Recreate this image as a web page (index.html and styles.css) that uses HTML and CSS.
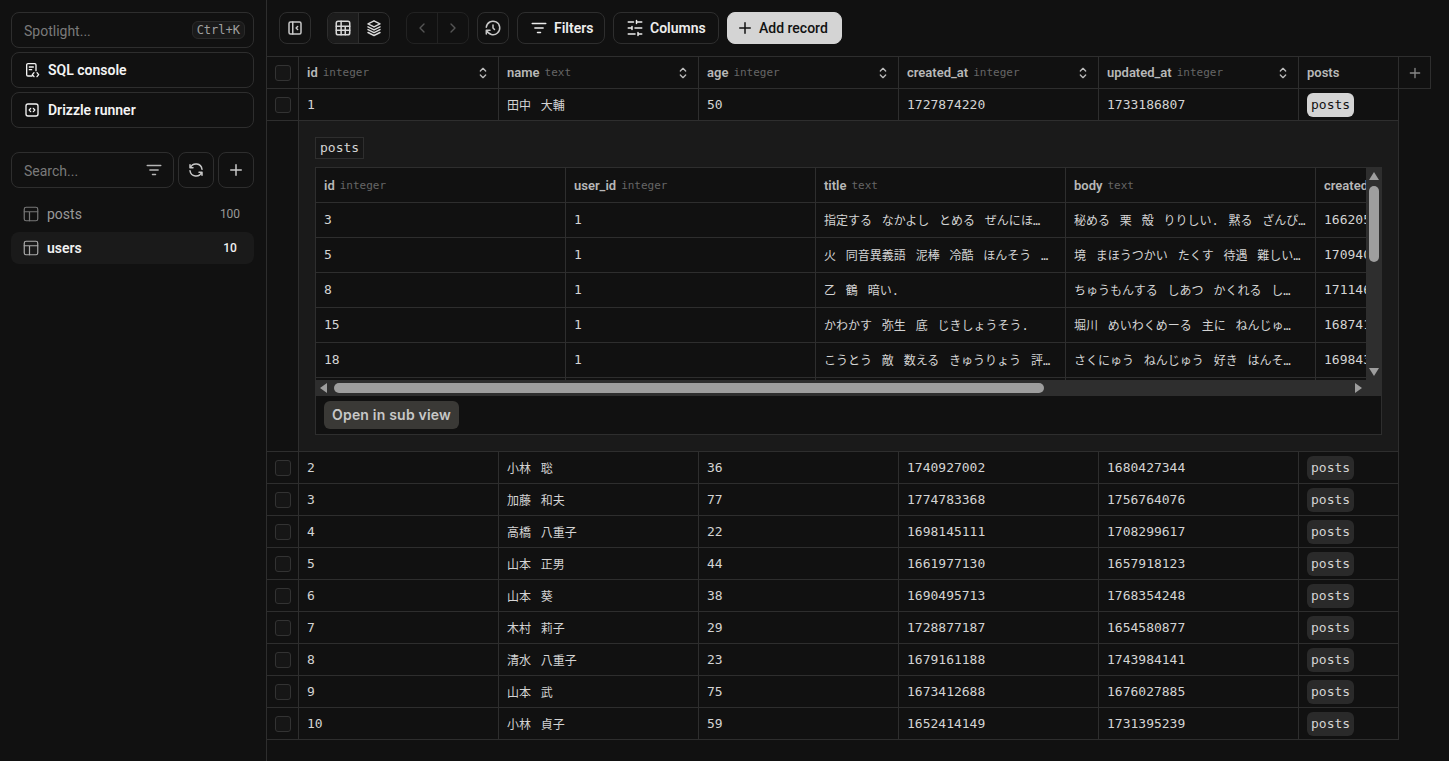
FILE: index.html
```html
<!DOCTYPE html>
<html lang="ja">
<head>
<meta charset="utf-8">
<title>Drizzle Studio</title>
<link rel="stylesheet" href="styles.css">
</head>
<body>
<svg class="defs" width="0" height="0" aria-hidden="true">
  <symbol id="i-table" viewBox="0 0 24 24"><rect x="3" y="3" width="18" height="18" rx="2.5"/><path d="M3 9.5h18M3 15h18M9.5 3v18M15 9.5v11.500"/></symbol>
  <symbol id="i-tbl" viewBox="0 0 24 24"><rect x="3" y="3" width="18" height="18" rx="2.500"/><path d="M3 9h18M10 9v12"/></symbol>
  <symbol id="i-file" viewBox="0 0 24 24"><path d="M12 21H6a2 2 0 0 1-2-2V4.500a2 2 0 0 1 2-2h10a2 2 0 0 1 2 2V13M8 7.500h6M8 11.500h3.500M15 16l-2.500 3 2.500 3M19.500 16l2.500 3-2.500 3"/></symbol>
  <symbol id="i-code" viewBox="0 0 24 24"><rect x="3" y="3" width="18" height="18" rx="3"/><path d="M10 9.500 7.800 12l2.200 2.500M14 9.500l2.200 2.500-2.200 2.500"/></symbol>
  <symbol id="i-filter" viewBox="0 0 24 24"><path d="M3 6h18M6.500 12h11M10 18h4"/></symbol>
  <symbol id="i-refresh" viewBox="0 0 24 24"><path d="M20 11a8.100 8.100 0 0 0-15.500-2m-.5-4v4h4M4 13a8.100 8.100 0 0 0 15.500 2m.5 4v-4h-4"/></symbol>
  <symbol id="i-plus" viewBox="0 0 24 24"><path d="M12 5v14M5 12h14"/></symbol>
  <symbol id="i-collapse" viewBox="0 0 24 24"><rect x="4" y="4" width="16" height="16" rx="2"/><path d="M9 4v16M15.500 10l-2 2 2 2"/></symbol>
  <symbol id="i-stack" viewBox="0 0 24 24"><path d="M12 2.500 4 6.500l8 4 8-4-8-4M4 10.500l8 4 8-4M4 18l8 4 8-4M4 14.200l8 4 8-4"/></symbol>
  <symbol id="i-left" viewBox="0 0 24 24"><path d="m15 6-6 6 6 6"/></symbol>
  <symbol id="i-right" viewBox="0 0 24 24"><path d="m9 6 6 6-6 6"/></symbol>
  <symbol id="i-history" viewBox="0 0 24 24"><path d="M12 8v4l2 2M3.050 11a9 9 0 1 1 .5 4m-.5 5v-5h5"/></symbol>
  <symbol id="i-sliders" viewBox="0 0 24 24"><path d="M21 4h-7M10 4H3M21 12h-9M8 12H3M21 20h-5M12 20H3M14 2v4M8 10v4M16 18v4"/></symbol>
  <symbol id="i-sort" viewBox="0 0 24 24"><path d="m8 9 4-4 4 4M16 15l-4 4-4-4"/></symbol>
</svg>

<div class="app">
  <aside class="sidebar">
    <div class="side-stack">
      <div class="side-btn spotlight"><span class="hint">Spotlight...</span><kbd>Ctrl+K</kbd></div>
      <div class="side-btn strong"><svg class="ic16"><use href="#i-file"/></svg><span>SQL console</span></div>
      <div class="side-btn strong"><svg class="ic16"><use href="#i-code"/></svg><span>Drizzle runner</span></div>
    </div>
    <div class="search-row">
      <div class="search"><span class="hint">Search...</span><svg class="ic18"><use href="#i-filter"/></svg></div>
      <div class="square-btn"><svg class="ic18"><use href="#i-refresh"/></svg></div>
      <div class="square-btn"><svg class="ic18"><use href="#i-plus"/></svg></div>
    </div>
    <ul class="tables">
      <li class="table-item"><svg class="ic-tbl"><use href="#i-tbl"/></svg><span class="table-name">posts</span><span class="count">100</span></li>
      <li class="table-item active"><svg class="ic-tbl"><use href="#i-tbl"/></svg><span class="table-name">users</span><span class="count">10</span></li>
    </ul>
  </aside>

  <main class="main">
    <div class="toolbar">
      <div class="tool icon-tool"><svg class="ic18"><use href="#i-collapse"/></svg></div>
      <div class="seg">
        <div class="seg-item on"><svg class="ic18"><use href="#i-table"/></svg></div>
        <div class="seg-item"><svg class="ic18"><use href="#i-stack"/></svg></div>
      </div>
      <div class="seg dim">
        <div class="seg-item"><svg class="ic16"><use href="#i-left"/></svg></div>
        <div class="seg-item"><svg class="ic16"><use href="#i-right"/></svg></div>
      </div>
      <div class="tool icon-tool near"><svg class="ic18"><use href="#i-history"/></svg></div>
      <div class="tool near filters"><svg class="ic18"><use href="#i-filter"/></svg><span>Filters</span></div>
      <div class="tool near columns"><svg class="ic18"><use href="#i-sliders"/></svg><span>Columns</span></div>
      <div class="tool near primary"><svg class="ic18"><use href="#i-plus"/></svg><span>Add record</span></div>
    </div>

    <table class="grid">
      <colgroup><col class="c-check"><col class="c-200"><col class="c-200"><col class="c-200"><col class="c-200"><col class="c-200"><col class="c-100"><col class="c-check"></colgroup>
      <thead>
        <tr>
          <th><span class="check"></span></th>
          <th><div class="th"><b>id</b><i>integer</i><svg class="ic16"><use href="#i-sort"/></svg></div></th>
          <th><div class="th"><b>name</b><i>text</i><svg class="ic16"><use href="#i-sort"/></svg></div></th>
          <th><div class="th"><b>age</b><i>integer</i><svg class="ic16"><use href="#i-sort"/></svg></div></th>
          <th><div class="th"><b>created_at</b><i>integer</i><svg class="ic16"><use href="#i-sort"/></svg></div></th>
          <th><div class="th"><b>updated_at</b><i>integer</i><svg class="ic16"><use href="#i-sort"/></svg></div></th>
          <th><div class="th"><b>posts</b></div></th>
          <th class="add-col"><svg class="ic16"><use href="#i-plus"/></svg></th>
        </tr>
      </thead>
      <tbody>
        <tr><td class="cc"><span class="check"></span></td><td>1</td><td class="cjk">田中 大輔</td><td>50</td><td>1727874220</td><td>1733186807</td><td><span class="rel open">posts</span></td></tr>
        <tr>
          <td class="cc"></td>
          <td class="expanded" colspan="6">
            <span class="sub-tag">posts</span>
            <div class="sub-box">
              <div class="scroller">
                <div class="viewport">
                  <table class="subgrid">
                    <thead>
                      <tr>
                        <th><div class="th"><b>id</b><i>integer</i></div></th>
                        <th><div class="th"><b>user_id</b><i>integer</i></div></th>
                        <th><div class="th"><b>title</b><i>text</i></div></th>
                        <th><div class="th"><b>body</b><i>text</i></div></th>
                        <th><div class="th"><b>created_at</b><i>integer</i></div></th>
                      </tr>
                    </thead>
                    <tbody>
                      <tr><td>3</td><td>1</td><td class="cjk">指定する なかよし とめる ぜんにほ…</td><td class="cjk">秘める 栗 殻 りりしい. 黙る ざんぴ…</td><td>1662058</td></tr>
                      <tr><td>5</td><td>1</td><td class="cjk">火 同音異義語 泥棒 冷酷 ほんそう …</td><td class="cjk">境 まほうつかい たくす 待遇 難しい…</td><td>1709400</td></tr>
                      <tr><td>8</td><td>1</td><td class="cjk">乙 鶴 暗い.</td><td class="cjk">ちゅうもんする しあつ かくれる し…</td><td>1711460</td></tr>
                      <tr><td>15</td><td>1</td><td class="cjk">かわかす 弥生 底 じきしょうそう.</td><td class="cjk">堀川 めいわくめーる 主に ねんじゅ…</td><td>1687410</td></tr>
                      <tr><td>18</td><td>1</td><td class="cjk">こうとう 敵 数える きゅうりょう 評…</td><td class="cjk">さくにゅう ねんじゅう 好き はんそ…</td><td>1698430</td></tr>
                      <tr><td></td><td></td><td></td><td></td><td></td></tr>
                    </tbody>
                  </table>
                </div>
                <div class="vbar">
                  <span class="arrow up"></span>
                  <span class="vthumb"></span>
                  <span class="arrow down"></span>
                </div>
                <div class="hbar">
                  <span class="arrow back"></span>
                  <span class="hthumb"></span>
                  <span class="arrow fwd"></span>
                </div>
                <div class="corner"></div>
              </div>
              <div class="sub-foot"><span class="open-sub">Open in sub view</span></div>
            </div>
          </td>
        </tr>
        <tr><td class="cc"><span class="check"></span></td><td>2</td><td class="cjk">小林 聡</td><td>36</td><td>1740927002</td><td>1680427344</td><td><span class="rel">posts</span></td></tr>
        <tr><td class="cc"><span class="check"></span></td><td>3</td><td class="cjk">加藤 和夫</td><td>77</td><td>1774783368</td><td>1756764076</td><td><span class="rel">posts</span></td></tr>
        <tr><td class="cc"><span class="check"></span></td><td>4</td><td class="cjk">高橋 八重子</td><td>22</td><td>1698145111</td><td>1708299617</td><td><span class="rel">posts</span></td></tr>
        <tr><td class="cc"><span class="check"></span></td><td>5</td><td class="cjk">山本 正男</td><td>44</td><td>1661977130</td><td>1657918123</td><td><span class="rel">posts</span></td></tr>
        <tr><td class="cc"><span class="check"></span></td><td>6</td><td class="cjk">山本 葵</td><td>38</td><td>1690495713</td><td>1768354248</td><td><span class="rel">posts</span></td></tr>
        <tr><td class="cc"><span class="check"></span></td><td>7</td><td class="cjk">木村 莉子</td><td>29</td><td>1728877187</td><td>1654580877</td><td><span class="rel">posts</span></td></tr>
        <tr><td class="cc"><span class="check"></span></td><td>8</td><td class="cjk">清水 八重子</td><td>23</td><td>1679161188</td><td>1743984141</td><td><span class="rel">posts</span></td></tr>
        <tr><td class="cc"><span class="check"></span></td><td>9</td><td class="cjk">山本 武</td><td>75</td><td>1673412688</td><td>1676027885</td><td><span class="rel">posts</span></td></tr>
        <tr><td class="cc"><span class="check"></span></td><td>10</td><td class="cjk">小林 貞子</td><td>59</td><td>1652414149</td><td>1731395239</td><td><span class="rel">posts</span></td></tr>
      </tbody>
    </table>
  </main>
</div>
</body>
</html>
```
FILE: styles.css
```css
* { box-sizing: border-box; }
html, body { margin: 0; height: 100%; }
body {
  background: #111;
  color: #d4d4d4;
  font-family: Roboto, "Noto Sans CJK JP", sans-serif;
  font-size: 14px;
  overflow: hidden;
}
.defs { position: absolute; }
svg { fill: none; stroke: currentColor; stroke-width: 2; stroke-linecap: round; stroke-linejoin: round; flex: none; }
.ic-tbl { width: 18px; height: 18px; }
.ic16 { width: 16px; height: 16px; }
.ic18 { width: 18px; height: 18px; }

.app { display: flex; height: 761px; }

/* Sidebar */
.sidebar { width: 267px; flex: none; border-right: 1px solid #2e2e2e; padding: 12px 12px 0 11px; }
.side-stack { display: flex; flex-direction: column; gap: 4px; }
.side-btn {
  height: 36px; display: flex; align-items: center; gap: 8px;
  padding: 0 8px 0 12px; border: 1px solid #2e2e2e; border-radius: 8px; color: #fff;
}
.spotlight { justify-content: space-between; color: #7a7a7a; }
.hint { padding-top: 2px; }
.strong { font-weight: 600; color: #f4f4f4; }
kbd {
  font: 12px "DejaVu Sans Mono", monospace; color: #a0a0a0; height: 18px; line-height: 16px;
  padding: 0 4px; border: 1px solid #2a2a2a; border-radius: 6px; background: #1a1a1a;
}
.search-row { display: flex; gap: 4px; margin-top: 24px; }
.search {
  flex: 1; height: 36px; display: flex; align-items: center; justify-content: space-between;
  padding: 0 10px 0 12px; border: 1px solid #2e2e2e; border-radius: 8px; color: #7a7a7a;
}
.search svg { color: #b5b5b5; }
.square-btn {
  width: 36px; height: 36px; display: flex; align-items: center; justify-content: center;
  border: 1px solid #2e2e2e; border-radius: 8px; color: #c8c8c8;
}
.tables { list-style: none; margin: 10px 0 0; padding: 0; display: flex; flex-direction: column; gap: 2px; }
.table-item {
  height: 32px; display: flex; align-items: center; padding: 0 12px 0 11px;
  border-radius: 8px; color: #999; font-size: 14px;
}
.table-item svg { color: #777; stroke-width: 1.6; }
.table-name { margin-left: 7px; flex: 1; }
.count { width: 24px; text-align: center; font-size: 12px; color: #999; }
.table-item.active { background: #1a1a1a; color: #f0f0f0; font-weight: 600; }
.table-item.active svg { color: #aaa; }
.table-item.active .count { color: #f0f0f0; font-weight: 500; }

/* Toolbar */
.main { flex: 1; min-width: 0; }
.toolbar { height: 56px; display: flex; align-items: center; padding-left: 12px; }
.tool {
  height: 32px; display: flex; align-items: center; gap: 6px; padding: 0 12px; white-space: nowrap;
  border: 1px solid #2e2e2e; border-radius: 8px; color: #ededed; font-weight: 600; font-size: 14px;
}
.icon-tool { width: 32px; padding: 0; justify-content: center; color: #c8c8c8; }
.near { margin-left: 8px; }
.filters { width: 88px; }
.columns { width: 106px; }
.primary { width: 115px; padding: 0 8px; gap: 5px; background: #d4d4d4; border-color: #d4d4d4; color: #111; font-weight: 500; }
.seg { display: flex; width: 63px; height: 32px; margin-left: 16px; border: 1px solid #2e2e2e; border-radius: 8px; overflow: hidden; }
.seg-item { flex: 1; display: flex; align-items: center; justify-content: center; color: #d8d8d8; }
.seg-item + .seg-item { border-left: 1px solid #2e2e2e; }
.seg-item.on { background: #1c1c1c; }
.seg.dim { border-color: #222; }
.seg.dim .seg-item { color: #555; }
.seg.dim .seg-item + .seg-item { border-left-color: #222; }

/* Main grid */
.grid, .subgrid { border-collapse: separate; border-spacing: 0; table-layout: fixed; }
.grid { width: 1164px; font: 13px "DejaVu Sans Mono", "Noto Sans CJK JP", monospace; color: #d4d4d4; }
.c-check { width: 32px; }
.c-200 { width: 200px; }
.c-100 { width: 100px; }
.grid th, .grid td, .subgrid th, .subgrid td {
  border-right: 1px solid #2e2e2e; border-bottom: 1px solid #2e2e2e;
  padding: 0 8px; text-align: left; white-space: nowrap; overflow: hidden; font-weight: 400;
}
.grid td.cjk { font-size: 12px; word-spacing: 2.6px; }
.grid > thead th { height: 33px; border-top: 1px solid #2e2e2e; }
.grid > tbody > tr > td { height: 32px; }
.grid > thead th:first-child, .grid > tbody > tr > td.cc { padding: 0; text-align: center; }
.check {
  display: inline-block; width: 16px; height: 16px; vertical-align: middle;
  border: 1px solid #333; border-radius: 3px; background: #161616;
}
.th { display: flex; align-items: center; gap: 5px; }
.th b { font: 600 13px Roboto, sans-serif; color: #b8b8b8; }
.th i { font: 11px "DejaVu Sans Mono", monospace; color: #666; }
.th svg { margin-left: auto; margin-right: -1px; color: #bbb; }
.grid th.add-col { padding: 0; text-align: center; color: #888; }
.add-col svg { vertical-align: middle; }
.rel {
  display: inline-block; height: 24px; line-height: 24px; padding: 0 4px; border-radius: 6px;
  background: #2a2a2a; vertical-align: middle;
}
.rel.open { background: #d4d4d4; color: #111; }

/* Expanded row */
.grid > tbody > tr > td.expanded { background: #1a1a1a; padding: 16px; height: 331px; vertical-align: top; }
.sub-tag {
  display: block; width: 49px; height: 22px; line-height: 20px; padding: 0 4px;
  border: 1px solid #2e2e2e; background: #171717;
}
.sub-box { margin-top: 8px; height: 268px; border: 1px solid #2e2e2e; background: #111; }
.scroller {
  margin: -1px -1px 0 0; height: 229px; display: grid;
  grid-template-columns: 1050px 16px; grid-template-rows: 213px 16px;
}
.viewport { overflow: hidden; border-top: 1px solid #2e2e2e; }
.subgrid { width: 1250px; }
.subgrid th, .subgrid td { width: 250px; height: 35px; }
.subgrid td { padding-bottom: 2px; }
.vbar, .hbar, .corner { background: #2e2e2e; }
.vbar { display: flex; flex-direction: column; align-items: center; padding: 5px 0 4px; }
.hbar { display: flex; align-items: center; padding: 0 4px; }
.vthumb { width: 10px; height: 76px; margin-top: 6px; border-radius: 5px; background: #9e9e9e; }
.hthumb { width: 710px; height: 10px; margin-left: 7px; border-radius: 5px; background: #9e9e9e; }
.arrow { width: 0; height: 0; border-style: solid; border-color: transparent; flex: none; }
.arrow.up { border-width: 0 5px 8px; border-bottom-color: #9e9e9e; }
.arrow.down { margin-top: auto; border-width: 8px 5px 0; border-top-color: #9e9e9e; }
.arrow.back { border-width: 5px 7px 5px 0; border-right-color: #9e9e9e; }
.arrow.fwd { margin-left: auto; border-width: 5px 0 5px 7px; border-left-color: #9e9e9e; }
.sub-foot { height: 38px; display: flex; align-items: center; padding: 0 8px; }
.open-sub {
  height: 28px; padding: 0 8px; border-radius: 6px; background: #3a3936;
  font: 600 14px/28px Inter, sans-serif; color: #c8c8c8; letter-spacing: .2px;
}
```
